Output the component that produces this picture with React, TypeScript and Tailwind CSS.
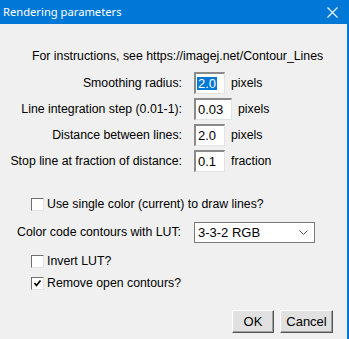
import React from 'react';

const font = { fontFamily: '"Liberation Sans", Arial, sans-serif' };

const Field = ({ value, width, selected }: { value: string; width: string; selected?: boolean }) => (
  <div
    className={`${width} h-[22px] bg-white border-t-2 border-l-2 border-b border-r border-t-[#8a8a8a] border-l-[#8a8a8a] border-b-[#e3e3e3] border-r-[#e3e3e3] flex items-center pl-[1px] text-[13px] text-black leading-none`}
  >
    {selected ? <span className="bg-[#0078d7] text-white px-[1px]">{value}</span> : <span className="px-[1px]">{value}</span>}
  </div>
);

const Check = ({ checked }: { checked?: boolean }) => (
  <div className="w-[13px] h-[13px] bg-white border border-t-[#6f6f6f] border-l-[#6f6f6f] border-b-[#e3e3e3] border-r-[#e3e3e3] flex items-center justify-center">
    {checked && (
      <svg width="9" height="9" viewBox="0 0 9 9">
        <path d="M1.5 4 L3.5 6.5 L7.5 1.5" stroke="#000" strokeWidth="1.7" fill="none" />
      </svg>
    )}
  </div>
);

const Button = ({ label, width }: { label: string; width: string }) => (
  <button className={`${width} h-[23px] bg-[#e1e1e1] border border-t-white border-l-white border-b-[#555] border-r-[#555] shadow-[inset_-1px_-1px_0_#a0a0a0] text-[13px] text-black leading-none`}>
    {label}
  </button>
);

export default function App() {
  const rows = [
    { label: 'Smoothing radius:', value: '2.0', unit: 'pixels', width: 'w-[31px]', selected: true },
    { label: 'Line integration step (0.01-1):', value: '0.03', unit: 'pixels', width: 'w-[38px]' },
    { label: 'Distance between lines:', value: '2.0', unit: 'pixels', width: 'w-[31px]' },
    { label: 'Stop line at fraction of distance:', value: '0.1', unit: 'fraction', width: 'w-[31px]' },
  ];

  return (
    <div className="w-[349px] h-[339px] bg-[#f0f0f0] flex flex-col overflow-hidden" style={font}>
      {/* Title bar */}
      <div className="h-[24px] bg-[#0078d7] flex items-center justify-between pl-[3px] pr-[11px] shrink-0">
        <span className="text-white text-[11.2px]" style={{ fontFamily: '"Noto Sans", sans-serif' }}>
          Rendering parameters
        </span>
        <svg width="11" height="11" viewBox="0 0 11 11">
          <path d="M0.5 0.5 L10.5 10.5 M10.5 0.5 L0.5 10.5" stroke="#fff" strokeWidth="1.1" />
        </svg>
      </div>

      <div className="flex-1 border-r-2 border-[#0078d7] flex flex-col text-[12.3px] text-black">
        <div className="pt-[25px] pl-[32px] leading-[14px]">For instructions, see https://imagej.net/Contour_Lines</div>

        <div className="mt-[9px] flex flex-col gap-[4px]">
          {rows.map((r) => (
            <div key={r.label} className="flex items-center">
              <div className="w-[182px] text-right">{r.label}</div>
              <div className="ml-[12px]">
                <Field value={r.value} width={r.width} selected={r.selected} />
              </div>
              <span className="ml-[6px]">{r.unit}</span>
            </div>
          ))}
        </div>

        <div className="mt-[25px] ml-[31px] flex items-center gap-[3px] h-[14px]">
          <Check />
          <span>Use single color (current) to draw lines?</span>
        </div>

        <div className="mt-[11px] flex items-center">
          <div className="w-[182px] pl-[17px]">Color code contours with LUT:</div>
          <div className="ml-[12px] w-[121px] h-[21px] bg-white border border-[#7a7a7a] flex items-center justify-between pl-[3px] pr-[6px] text-[13px]">
            <span>3-3-2 RGB</span>
            <svg width="9" height="6" viewBox="0 0 9 6">
              <path d="M0.5 0.5 L4.5 4.5 L8.5 0.5" stroke="#555" strokeWidth="1" fill="none" />
            </svg>
          </div>
        </div>

        <div className="mt-[11px] ml-[31px] flex items-center gap-[3px] h-[14px]">
          <Check />
          <span>Invert LUT?</span>
        </div>

        <div className="mt-[8px] ml-[31px] flex items-center gap-[3px] h-[14px]">
          <Check checked />
          <span>Remove open contours?</span>
        </div>

        <div className="mt-[20px] flex justify-end gap-[6px] pr-[14px]">
          <Button label="OK" width="w-[42px]" />
          <Button label="Cancel" width="w-[53px]" />
        </div>
      </div>
    </div>
  );
}
